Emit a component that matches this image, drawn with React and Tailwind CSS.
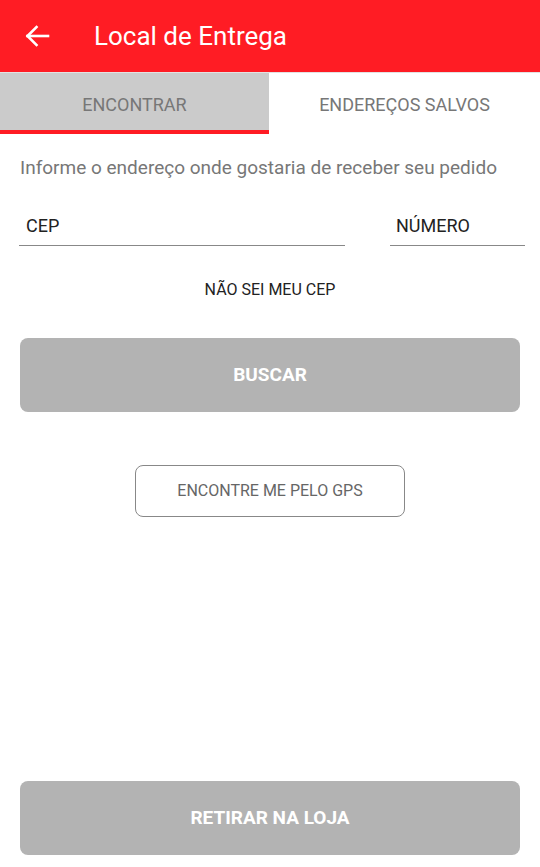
import React from "react";

export default function App() {
  return (
    <div className="flex h-[867px] w-[540px] flex-col bg-white font-['Roboto',sans-serif]">
      <header className="flex h-[72px] shrink-0 items-center bg-[#ff1c24]">
        <div className="flex w-[94px] shrink-0 items-center pl-[25px]">
          <svg width="25" height="22" viewBox="0 0 25 22" fill="none" stroke="white" strokeWidth="2.6" strokeLinecap="square">
            <path d="M2.5 11H23" />
            <path d="M11.5 2L2.5 11L11.5 20" strokeLinejoin="miter" />
          </svg>
        </div>
        <h1 className="text-[26px] font-normal text-white">Local de Entrega</h1>
      </header>
      <div className="h-px bg-[#e2e2e2]" />
      <div className="flex h-[61px] shrink-0">
        <div className="flex w-[269px] flex-col bg-[#cbcbcb]">
          <div className="flex flex-1 items-center justify-center pt-[5px] text-[18px] text-[#777]">ENCONTRAR</div>
          <div className="h-[4px] bg-[#ff1c24]" />
        </div>
        <div className="flex flex-1 items-center justify-center pb-[4px] pt-[5px] text-[18px] text-[#777]">ENDEREÇOS SALVOS</div>
      </div>
      <div className="flex flex-1 flex-col px-[20px]">
        <p className="mt-[20px] text-[19px] leading-[28px] text-[#777]">Informe o endereço onde gostaria de receber seu pedido</p>
        <div className="mt-[30px] flex gap-[45px]">
          <div className="-ml-px w-[326px] border-b border-[#888] pb-[6px] pl-[7px] text-[18px] leading-[27px] text-[#222]">CEP</div>
          <div className="-mr-[5px] flex-1 border-b border-[#888] pb-[6px] pl-[6px] text-[18px] leading-[27px] text-[#222]">NÚMERO</div>
        </div>
        <p className="mt-[32px] text-center text-[16px] leading-[24px] text-[#222]">NÃO SEI MEU CEP</p>
        <button className="mt-[36px] flex h-[74px] items-center justify-center rounded-[8px] bg-[#b3b3b3] text-[19px] font-bold text-white">BUSCAR</button>
        <button className="mx-auto mt-[53px] flex h-[52px] w-[270px] items-center justify-center rounded-[8px] border border-[#888] text-[16px] text-[#666]">ENCONTRE ME PELO GPS</button>
        <button className="mb-[12px] mt-auto flex h-[74px] items-center justify-center rounded-[8px] bg-[#b3b3b3] text-[19px] font-bold text-white">RETIRAR NA LOJA</button>
      </div>
    </div>
  );
}
